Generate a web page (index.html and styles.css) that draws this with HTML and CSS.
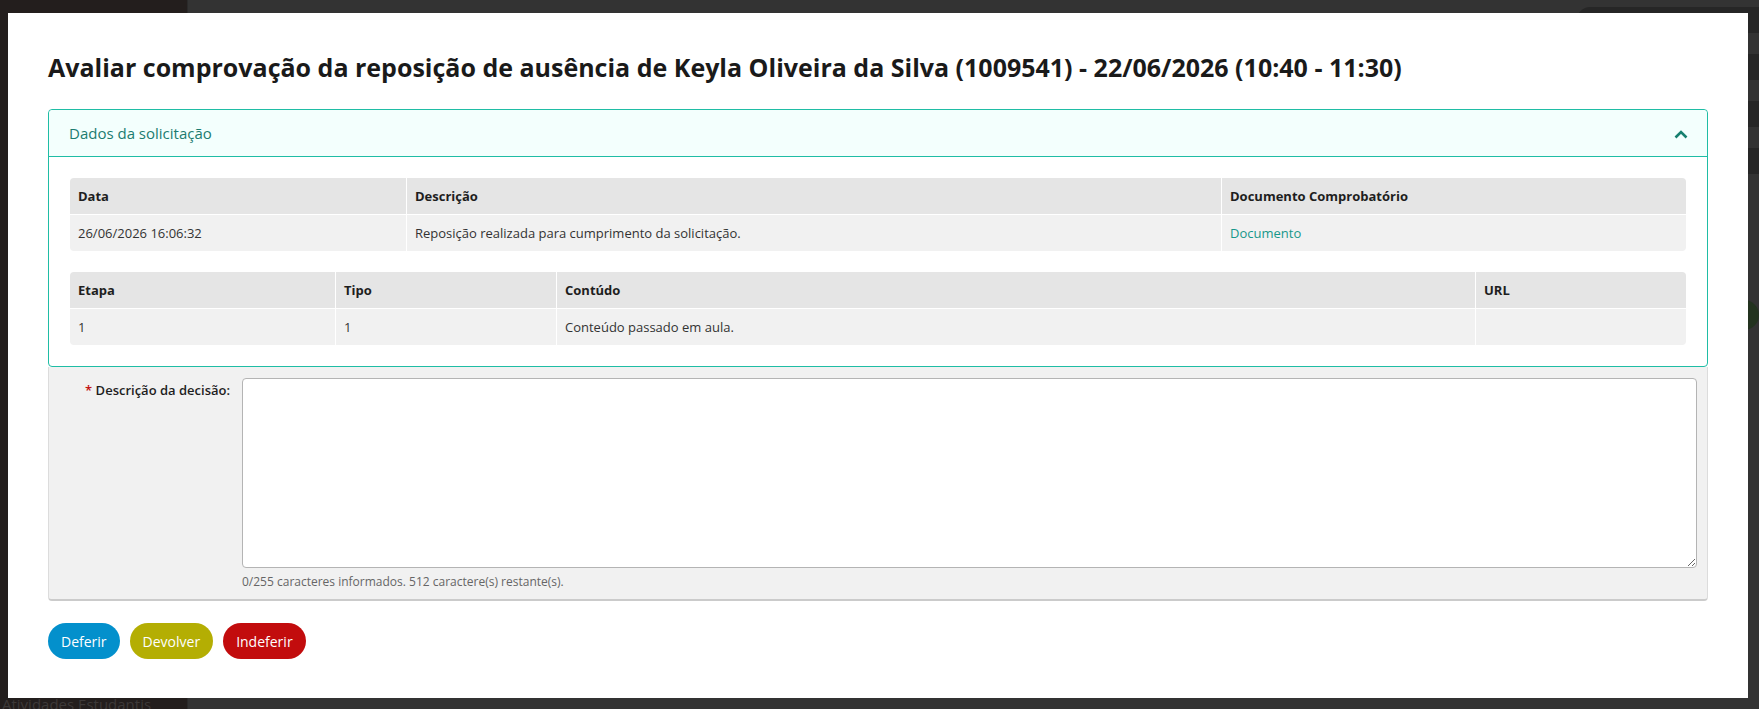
FILE: index.html
```html
<!DOCTYPE html>
<html lang="pt-BR">
<head>
<meta charset="utf-8">
<title>Avaliar comprovação</title>
<link rel="stylesheet" href="styles.css">
</head>
<body>
<div class="backdrop">
  <aside class="sidebar">
    <div class="side-item">Atividades Estudantis</div>
  </aside>
  <main class="page">
    <div class="page-right">
      <div class="pill pill-wide"></div>
      <div class="pill"></div>
      <div class="pill"></div>
      <div class="pill"></div>
      <div class="dot"></div>
    </div>
  </main>
</div>

<div class="modal">
  <h1 class="title">Avaliar comprovação da reposição de ausência de Keyla Oliveira da Silva (1009541) - 22/06/2026 (10:40 - 11:30)</h1>

  <section class="panel">
    <div class="panel-head">
      <span class="panel-title">Dados da solicitação</span>
      <svg class="chev" width="14" height="9" viewBox="0 0 14 9"><path d="M1.5 7.5 L7 2 L12.5 7.5" fill="none" stroke="#16806f" stroke-width="2.6"/></svg>
    </div>
    <div class="panel-body">
      <div class="tbl-wrap">
        <table class="tbl">
          <colgroup><col class="c-data"><col class="c-desc"><col class="c-doc"></colgroup>
          <thead><tr><th>Data</th><th>Descrição</th><th>Documento Comprobatório</th></tr></thead>
          <tbody><tr><td>26/06/2026 16:06:32</td><td>Reposição realizada para cumprimento da solicitação.</td><td><a class="link" href="#">Documento</a></td></tr></tbody>
        </table>
      </div>
      <div class="tbl-wrap">
        <table class="tbl">
          <colgroup><col class="c-etapa"><col class="c-tipo"><col class="c-cont"><col class="c-url"></colgroup>
          <thead><tr><th>Etapa</th><th>Tipo</th><th>Contúdo</th><th>URL</th></tr></thead>
          <tbody><tr><td>1</td><td>1</td><td>Conteúdo passado em aula.</td><td></td></tr></tbody>
        </table>
      </div>
    </div>
  </section>

  <div class="form-box">
    <label class="f-label" for="desc"><span class="req">*</span> Descrição da decisão:</label>
    <div class="f-field">
      <textarea id="desc" class="f-area"></textarea>
      <div class="f-help">0/255 caracteres informados. 512 caractere(s) restante(s).</div>
    </div>
  </div>

  <div class="actions">
    <button class="btn btn-blue">Deferir</button>
    <button class="btn btn-olive">Devolver</button>
    <button class="btn btn-red">Indeferir</button>
  </div>
</div>
</body>
</html>
```

FILE: styles.css
```css
* { box-sizing: border-box; }
html, body { margin: 0; height: 100%; }
body {
  font-family: "Open Sans", "Noto Sans", "Liberation Sans", sans-serif;
  color: #333;
  background: #333;
  overflow: hidden;
}
.backdrop { display: flex; height: 709px; }
.sidebar {
  width: 187px;
  background: #231e1d;
  padding: 0 0 0 2px;
  display: flex;
  flex-direction: column;
  justify-content: flex-end;
}
.side-item { color: #3d3938; font-size: 15px; line-height: 18px; white-space: nowrap; margin-bottom: -4px; }
.page { flex: 1; background: #333; border-left: 1px solid #2a2a2a; display: flex; justify-content: flex-end; }
.page-right { width: 182px; padding-top: 7px; display: flex; flex-direction: column; gap: 21px; align-items: flex-end; }
.pill { width: 60px; height: 26px; background: #262626; border-radius: 13px 0 0 13px; }
.pill-wide { width: 182px; }
.dot { width: 30px; height: 30px; border-radius: 50%; background: #23331f; margin-top: 105px; }

.modal {
  position: fixed;
  left: 8px; top: 13px;
  width: 1740px; height: 685px;
  background: #fff;
  padding: 39px 40px 0 40px;
}
.title {
  margin: 0 0 27px 0;
  font-size: 25px;
  line-height: 30px;
  font-weight: 700;
  color: #1a1a1a;
  white-space: nowrap;
}
.panel {
  border: 1px solid #1fbda5;
  border-radius: 4px;
}
.panel-head {
  height: 47px;
  background: #f3fffd;
  border-bottom: 1px solid #1fbda5;
  border-radius: 4px 4px 0 0;
  display: flex;
  align-items: center;
  justify-content: space-between;
  padding: 0 19px 0 20px;
}
.panel-title { font-size: 15px; color: #1b7c70; }
.chev { display: block; margin-top: 2px; }
.panel-body {
  padding: 21px 21px 21px 21px;
  display: flex;
  flex-direction: column;
  gap: 21px;
}
.tbl-wrap { border-radius: 4px; overflow: hidden; }
.tbl {
  width: 100%;
  border-collapse: separate;
  border-spacing: 0;
  table-layout: fixed;
  font-size: 13px;
}
.c-data { width: 336px; }
.c-desc { width: 815px; }
.c-doc { width: auto; }
.c-etapa { width: 265px; }
.c-tipo { width: 221px; }
.c-cont { width: 919px; }
.c-url { width: auto; }
.tbl th, .tbl td {
  text-align: left;
  padding: 0 8px;
  border-left: 1px solid #fff;
}
.tbl th:first-child, .tbl td:first-child { border-left: 0; }
.tbl th {
  background: #e5e5e5;
  height: 37px;
  font-weight: 700;
  color: #1e1e1e;
  border-bottom: 1px solid #fff;
}
.tbl td { background: #f1f1f1; height: 36px; color: #333; }
.link { color: #17978a; text-decoration: none; }

.form-box {
  background: #f1f1f1;
  border-left: 1px solid #dcdcdc;
  border-right: 1px solid #dcdcdc;
  border-bottom: 2px solid #cbcbcb;
  border-radius: 0 0 4px 4px;
  display: grid;
  grid-template-columns: 181px 1fr;
  column-gap: 12px;
  padding: 11px 10px 9px 0;
}
.f-label {
  text-align: right;
  font-size: 13px;
  font-weight: 600;
  color: #1e1e1e;
  padding-top: 3px;
}
.req { color: #c31313; }
.f-area {
  display: block;
  width: 100%;
  height: 190px;
  border: 1px solid #b4b4b4;
  border-radius: 4px;
  background: #fff;
  resize: vertical;
  font-family: inherit;
}
.f-help { font-size: 12px; color: #666; margin-top: 6px; line-height: 16px; }

.actions { display: flex; gap: 10px; margin-top: 22px; }
.btn {
  height: 36px;
  border: 0;
  border-radius: 18px;
  color: #fff;
  font-family: inherit;
  font-size: 14px;
  padding: 0 13px;
  cursor: pointer;
}
.btn-blue { background: #0390cc; }
.btn-olive { background: #b4ae03; }
.btn-red { background: #c20c0d; }
```
